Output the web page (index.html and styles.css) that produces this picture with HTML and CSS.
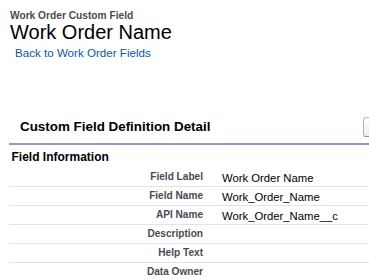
FILE: index.html
```html
<!DOCTYPE html>
<html lang="en">

<head>
    <meta charset="UTF-8">
    <meta name="viewport" content="width=device-width, initial-scale=1.0">
    <title>Work Order Custom Field</title>
    <link rel="stylesheet" href="styles.css">
</head>

<body>
    <div class="page-header">
        <h1 class="page-type">Work Order Custom Field</h1>
        <h2 class="page-title">Work Order Name</h2>
        <a href="#" class="back-link">Back to Work Order Fields</a>
    </div>

    <div class="page-block">
        <div class="block-header">
            <h2 class="block-title">Custom Field Definition Detail</h2>
            <div class="block-buttons">
                <button class="btn" aria-label="Edit"></button>
            </div>
        </div>

        <h3 class="section-title">Field Information</h3>
        <table class="detail-list">
            <tr>
                <td class="label-col">Field Label</td>
                <td class="data-col">Work Order Name</td>
            </tr>
            <tr>
                <td class="label-col">Field Name</td>
                <td class="data-col">Work_Order_Name</td>
            </tr>
            <tr>
                <td class="label-col">API Name</td>
                <td class="data-col">Work_Order_Name__c</td>
            </tr>
            <tr>
                <td class="label-col">Description</td>
                <td class="data-col"></td>
            </tr>
            <tr>
                <td class="label-col">Help Text</td>
                <td class="data-col"></td>
            </tr>
            <tr>
                <td class="label-col">Data Owner</td>
                <td class="data-col"></td>
            </tr>
        </table>
    </div>
</body>

</html>
```

FILE: styles.css
```css
* {
    margin: 0;
    padding: 0;
    box-sizing: border-box;
    font-family: "Liberation Sans", Arial, sans-serif;
}

html,
body {
    overflow: hidden;
}

body {
    background-color: #ffffff;
    color: #000;
}

.page-header {
    padding: 10px 0 0 10px;
}

.page-type {
    font-size: 10.2px;
    line-height: 12px;
    font-weight: bold;
    color: #4a4a56;
}

.page-title {
    font-size: 20px;
    line-height: 21px;
    font-weight: normal;
    color: #000;
}

.back-link {
    display: block;
    margin-top: 3px;
    padding-left: 5px;
    font-size: 11.6px;
    line-height: 14px;
    color: #015ba7;
    text-decoration: none;
}

.page-block {
    margin: 50px 0 0 9px;
    width: 600px;
}

.block-header {
    display: flex;
    align-items: center;
    height: 35px;
    border-bottom: 2px solid #8e9dbe;
}

.block-title {
    width: 354px;
    padding-left: 11px;
    font-size: 13.4px;
    line-height: 16px;
    font-weight: bold;
    color: #000;
}

.btn {
    display: block;
    width: 40px;
    height: 20px;
    border: 1px solid #b5b5b5;
    border-bottom-color: #8f8f8f;
    border-radius: 3px;
    background: linear-gradient(#ffffff, #ededed);
}

.section-title {
    padding: 4.5px 0 0 2.5px;
    font-size: 12px;
    line-height: 14px;
    font-weight: bold;
    color: #000;
}

.detail-list {
    margin-top: 4.5px;
    width: 100%;
    border-collapse: collapse;
    table-layout: fixed;
}

.detail-list td {
    padding-top: 2.5px;
    padding-bottom: 3.5px;
    line-height: 12px;
    vertical-align: top;
    border-bottom: 1px solid #e3e3e3;
}

.label-col {
    width: 204px;
    padding-right: 10px;
    padding-left: 2px;
    text-align: right;
    font-size: 10.1px;
    font-weight: bold;
    color: #4a4a56;
}

.detail-list .data-col {
    padding-top: 3.5px;
    padding-bottom: 2.5px;
    padding-left: 9px;
    padding-right: 2px;
    font-size: 11.3px;
    color: #000;
}
```
